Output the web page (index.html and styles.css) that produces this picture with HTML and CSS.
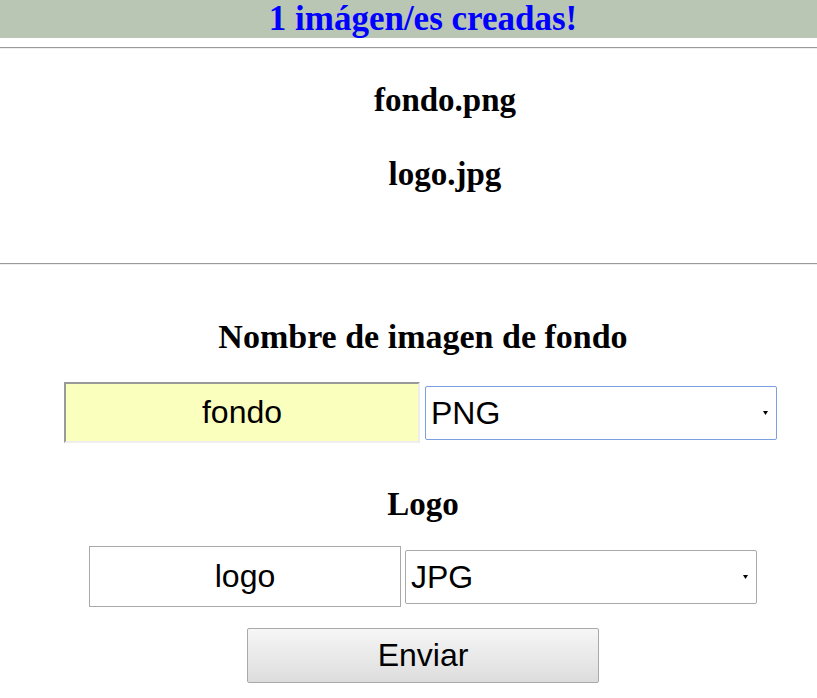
FILE: index.html
```html
<!DOCTYPE html>
<html lang="es">
<head>
<meta charset="utf-8">
<title>Imágenes</title>
<link rel="stylesheet" href="styles.css">
</head>
<body>
<div class="page">
  <h1 class="banner">1 imágen/es creadas!</h1>
  <hr class="rule rule-top">
  <ul class="files">
    <li>fondo.png</li>
    <li>logo.jpg</li>
  </ul>
  <hr class="rule rule-mid">
  <form class="form">
    <h2 class="label label-first">Nombre de imagen de fondo</h2>
    <div class="row row-first">
      <input class="name name-filled" type="text" value="fondo">
      <select class="fmt fmt-focus"><option>PNG</option><option>JPG</option></select>
    </div>
    <h2 class="label label-second">Logo</h2>
    <div class="row row-second">
      <input class="name" type="text" value="logo">
      <select class="fmt"><option>JPG</option><option>PNG</option></select>
    </div>
    <button class="send" type="button">Enviar</button>
  </form>
</div>
</body>
</html>
```
FILE: styles.css
```css
html, body {
  margin: 0;
  padding: 0;
  overflow: hidden;
  background: #ffffff;
}

.page {
  text-align: center;
  font-family: "Liberation Serif", "Times New Roman", serif;
  color: #000000;
}

.banner {
  margin: 0;
  height: 39px;
  margin-bottom: -1px;
  padding-left: 29px;
  line-height: 37px;
  font-size: 35px;
  font-weight: bold;
  color: #0000ff;
  background: linear-gradient(#bac6b4 38px, #ffffff 38px);
  white-space: nowrap;
}

.rule {
  margin: 0;
  height: 0;
  border: 0;
  border-top: 1px solid #9a9a9a;
  border-bottom: 1px solid #eeeeee;
}

.rule-top {
  margin-top: 9px;
}

.files {
  list-style: none;
  margin: 32px 0 70px;
  padding: 0 0 0 73px;
}

.files li {
  font-size: 33px;
  font-weight: bold;
  line-height: 38px;
}

.files li + li {
  margin-top: 36px;
}

.form {
  margin: 0;
  padding-left: 29px;
}

.label {
  margin: 0;
  font-size: 33px;
  font-weight: bold;
  line-height: 38px;
}

.label-first {
  margin-top: 53px;
  font-size: 34px;
}

.label-second {
  margin-top: 42px;
}

.row {
  display: flex;
  justify-content: center;
  align-items: center;
}

.row-first {
  margin-top: 26px;
  gap: 5px;
  padding-right: 5px;
}

.row-second {
  margin-top: 23px;
  gap: 4px;
}

.name {
  box-sizing: border-box;
  height: 61px;
  width: 312px;
  margin: 0;
  padding: 0 4px;
  border: 1px solid #a9a9a9;
  background: #ffffff;
  font-family: "Liberation Sans", Arial, sans-serif;
  font-size: 32px;
  color: #000000;
  text-align: center;
  outline: none;
}

.name-filled {
  width: 356px;
  border: 2px solid;
  border-color: #999999 #eeeeee #eeeeee #999999;
  background: #faffbd;
}

.fmt {
  box-sizing: border-box;
  width: 352px;
  height: 54px;
  margin: 0;
  padding: 0 20px 0 5px;
  border: 1px solid #a9a9a9;
  border-radius: 2px;
  background: #ffffff url("data:image/svg+xml,%3Csvg xmlns='http://www.w3.org/2000/svg' width='5' height='4'%3E%3Cpath d='M0 0H5L2.5 4Z' fill='%23000'/%3E%3C/svg%3E") no-repeat right 8px center;
  -webkit-appearance: none;
  appearance: none;
  font-family: "Liberation Sans", Arial, sans-serif;
  font-size: 32px;
  color: #000000;
  text-align: left;
  outline: none;
}

.fmt-focus {
  border-color: #7b9fe0;
}

.send {
  display: block;
  box-sizing: border-box;
  width: 352px;
  height: 55px;
  margin: 21px auto 0;
  padding: 0;
  border: 1px solid #a9a9a9;
  border-radius: 2px;
  background: linear-gradient(#f6f6f6, #dddddd);
  font-family: "Liberation Sans", Arial, sans-serif;
  font-size: 32px;
  color: #000000;
}
```
